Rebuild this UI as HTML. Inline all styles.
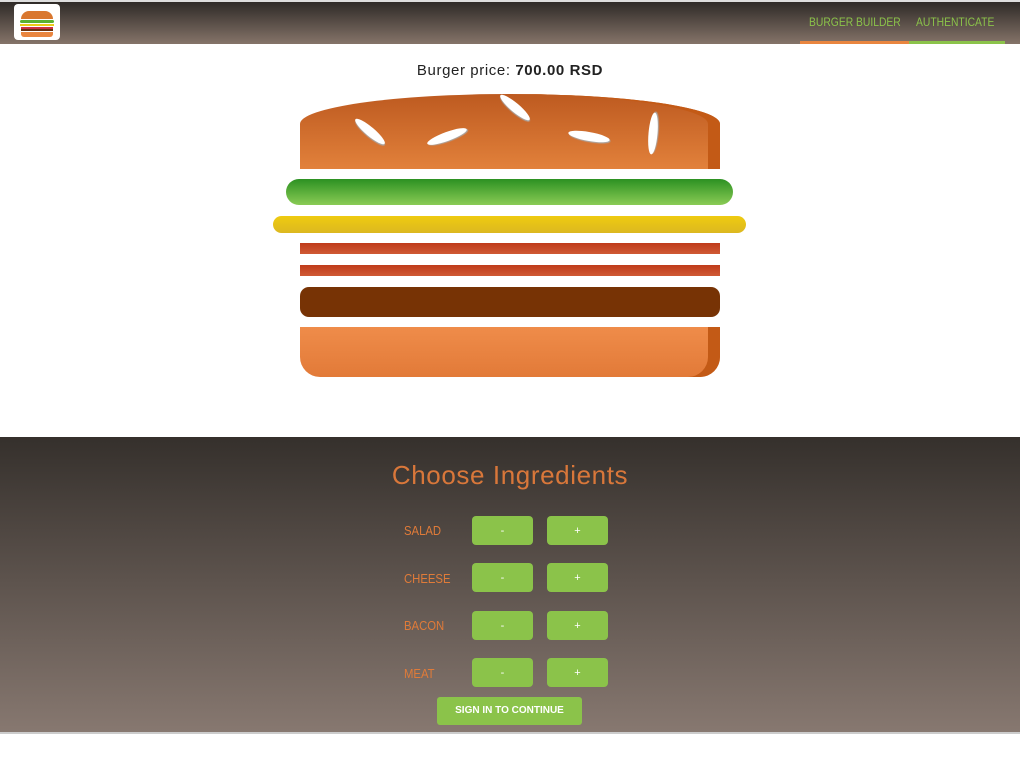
<!DOCTYPE html>
<html><head><meta charset="utf-8"><style>
*{margin:0;padding:0;box-sizing:border-box}
body{width:1020px;height:765px;background:#fff;font-family:"Liberation Sans",sans-serif;position:relative;overflow:hidden}
.hdr{position:absolute;left:0;top:0;width:1020px;height:44px;border-top:2px solid #ddd;background:linear-gradient(#2f2a27,#857469)}
.logo{position:absolute;left:14px;top:4px;width:46px;height:36px;background:#fff;border-radius:4px}
.nav{position:absolute;top:15px;font-size:12px;color:#8bc34a;transform:scaleX(0.86);transform-origin:left top;white-space:nowrap}
.ul{position:absolute;top:41px;height:3px}
.abs{position:absolute}
.price{position:absolute;top:62px;width:100%;text-align:center;font-size:15px;color:#222;letter-spacing:0.6px}
.ctl{position:absolute;left:0;top:437px;width:1020px;height:295px;background:linear-gradient(#35302c,#877870)}
.line{position:absolute;left:0;top:732px;width:1020px;height:2px;background:#ccc}
h2{position:absolute;top:460px;width:100%;text-align:center;font-weight:normal;font-size:26px;color:#d9773a;letter-spacing:0.6px}
.lbl{position:absolute;left:404px;font-size:13px;color:#e07b39;transform:scaleX(0.87);transform-origin:left top}
.btn{position:absolute;width:61px;height:29px;background:#8bc34a;border-radius:4px;color:#fff;font-size:11px;text-align:center;line-height:30px}
.sign{position:absolute;left:437px;top:697px;width:145px;height:28px;background:#8bc34a;border-radius:3px;color:#fff;font-size:10px;font-weight:bold;text-align:center;line-height:28px}
</style></head><body>
<div class="hdr"></div>
<div class="logo">
<div class="abs" style="left:7px;top:7px;width:32px;height:8px;background:#d9772f;border-radius:8px 8px 0 0"></div>
<div class="abs" style="left:6px;top:16px;width:34px;height:3px;background:#5bb030;border-radius:2px"></div>
<div class="abs" style="left:6px;top:20px;width:34px;height:2px;background:#eccb16"></div>
<div class="abs" style="left:7px;top:23px;width:32px;height:2px;background:#c34;"></div>
<div class="abs" style="left:7px;top:25px;width:32px;height:2px;background:#6b2f0c"></div>
<div class="abs" style="left:7px;top:28px;width:32px;height:5px;background:#e9853f;border-radius:0 0 3px 3px"></div>
</div>
<div class="nav" style="left:809px">BURGER BUILDER</div>
<div class="nav" style="left:916px">AUTHENTICATE</div>
<div class="ul" style="left:800px;width:109px;background:#e9853f"></div>
<div class="ul" style="left:909px;width:96px;background:#8bc34a"></div>
<div class="price">Burger price: <b>700.00 RSD</b></div>
<div class="abs" style="left:300px;top:94px;width:420px;height:75px;border-radius:50% 50% 0 0/40% 40% 0 0;background:linear-gradient(#bd5a20,#e2813b);box-shadow:inset -12px 0 0 #c35a16"></div>
<div class="abs" style="left:351px;top:127px;width:38px;height:9px;background:#fff;border-radius:50%;transform:rotate(40deg);box-shadow:1px 1px 1px #aaa"></div>
<div class="abs" style="left:426px;top:132px;width:42px;height:9px;background:#fff;border-radius:50%;transform:rotate(-20deg);box-shadow:1px 1px 1px #aaa"></div>
<div class="abs" style="left:496px;top:103px;width:38px;height:9px;background:#fff;border-radius:50%;transform:rotate(40deg);box-shadow:1px 1px 1px #aaa"></div>
<div class="abs" style="left:568px;top:132px;width:42px;height:9px;background:#fff;border-radius:50%;transform:rotate(10deg);box-shadow:1px 1px 1px #aaa"></div>
<div class="abs" style="left:632px;top:129px;width:42px;height:9px;background:#fff;border-radius:50%;transform:rotate(-85deg);box-shadow:1px 1px 1px #aaa"></div>
<div class="abs" style="left:286px;top:179px;width:447px;height:26px;border-radius:13px;background:linear-gradient(#2c9122,#8acb55)"></div>
<div class="abs" style="left:273px;top:216px;width:473px;height:17px;border-radius:9px;background:linear-gradient(#efcb10,#dcb820)"></div>
<div class="abs" style="left:300px;top:243px;width:420px;height:11px;background:linear-gradient(#bf3b1a,#cf5a35)"></div>
<div class="abs" style="left:300px;top:265px;width:420px;height:11px;background:linear-gradient(#bf3b1a,#cf5a35)"></div>
<div class="abs" style="left:300px;top:287px;width:420px;height:30px;border-radius:9px;background:#773305"></div>
<div class="abs" style="left:300px;top:327px;width:420px;height:50px;border-radius:0 0 20px 20px;background:linear-gradient(#ef8c4a,#e27a38);box-shadow:inset -12px 0 0 #c35a16"></div>
<div class="ctl"></div>
<div class="line"></div>
<h2>Choose Ingredients</h2>
<div class="lbl" style="top:523px">SALAD</div>
<div class="lbl" style="top:571px">CHEESE</div>
<div class="lbl" style="top:618px">BACON</div>
<div class="lbl" style="top:666px">MEAT</div>
<div class="btn" style="left:472px;top:516px">-</div><div class="btn" style="left:547px;top:516px">+</div>
<div class="btn" style="left:472px;top:563px">-</div><div class="btn" style="left:547px;top:563px">+</div>
<div class="btn" style="left:472px;top:611px">-</div><div class="btn" style="left:547px;top:611px">+</div>
<div class="btn" style="left:472px;top:658px">-</div><div class="btn" style="left:547px;top:658px">+</div>
<div class="sign">SIGN IN TO CONTINUE</div>
</body></html>
